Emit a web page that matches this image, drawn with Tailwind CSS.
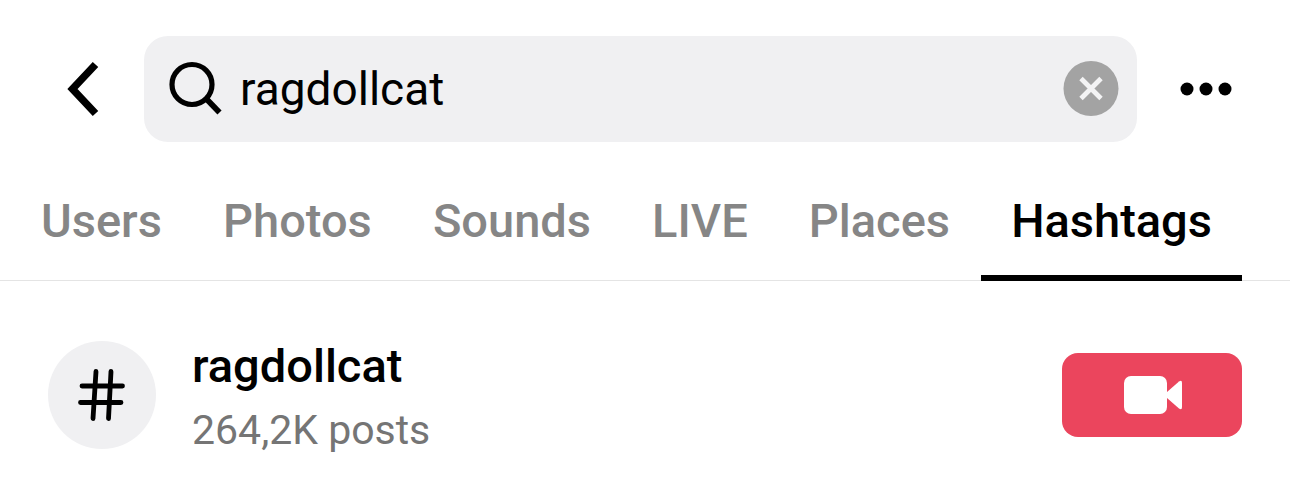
<!DOCTYPE html>
<html lang="en">
<head>
<meta charset="utf-8">
<meta name="viewport" content="width=device-width, initial-scale=1">
<title>Search: ragdollcat</title>
<script src="https://cdn.jsdelivr.net/npm/@tailwindcss/browser@4"></script>
</head>
<body class="min-h-screen bg-white text-black font-['Roboto','Liberation_Sans',sans-serif]">
<header class="flex items-center pt-9 pl-15 pr-[49px]">
  <button type="button" aria-label="Back" class="mr-9 shrink-0">
    <svg class="block h-16 w-12" viewBox="0 0 48 64" fill="none" stroke="currentColor" stroke-width="7.500" stroke-linejoin="miter"><path d="M35.500 7.500 12.500 32 35.500 56.500"/></svg>
  </button>
  <form role="search" class="flex h-[106px] min-w-0 flex-1 items-center rounded-3xl bg-[#f0f0f2] pl-6 pr-[18px]">
    <label for="q" class="mr-4 shrink-0">
      <svg class="block h-14 w-14" viewBox="0 0 56 56" fill="none" stroke="currentColor" role="img" aria-label="Search"><circle cx="24" cy="23.500" r="20" stroke-width="5.200"/><path d="M38 37.500 51.500 51.500" stroke-width="5.800"/></svg>
    </label>
    <input id="q" type="text" value="ragdollcat" class="min-w-0 flex-1 bg-transparent text-[46px] leading-16 outline-none">
    <button type="reset" aria-label="Clear search" class="shrink-0">
      <svg class="block h-14 w-14" viewBox="0 0 56 56"><circle cx="28" cy="27.500" r="27.500" fill="#a3a3a3"/><path d="M18 17.500 38 37.500M38 17.500 18 37.500" stroke="#f3f3f4" stroke-width="4.800"/></svg>
    </button>
  </form>
  <button type="button" aria-label="More options" class="ml-10 shrink-0">
    <svg class="block h-16 w-16" viewBox="0 0 64 64" fill="currentColor"><circle cx="10" cy="32" r="6.500"/><circle cx="29" cy="32" r="6.500"/><circle cx="48" cy="32" r="6.500"/></svg>
  </button>
</header>
<nav role="tablist" aria-label="Result type" class="mt-10 flex h-[99px] justify-between border-b border-[#e4e4e4] pl-[11px] pr-12 text-[47px] leading-14 font-medium text-[#868686] *:-mb-px *:border-b-6 *:px-[30px] *:pb-4">
  <button type="button" role="tab" aria-selected="false" class="border-transparent">Users</button>
  <button type="button" role="tab" aria-selected="false" class="border-transparent">Photos</button>
  <button type="button" role="tab" aria-selected="false" class="border-transparent">Sounds</button>
  <button type="button" role="tab" aria-selected="false" class="border-transparent">LIVE</button>
  <button type="button" role="tab" aria-selected="false" class="border-transparent">Places</button>
  <button type="button" role="tab" aria-selected="true" class="border-black text-black">Hashtags</button>
</nav>
<main class="flex items-center px-12 pt-[51px]">
  <div class="mr-9 flex size-27 shrink-0 items-center justify-center rounded-full bg-[#f0f0f2]">
    <svg class="h-14 w-12" viewBox="0 0 48 56" fill="none" stroke="currentColor" stroke-width="4.800" stroke-linecap="round" aria-hidden="true"><path d="M18 4.500 15 51.500M33 4.500 30.500 51.500M4 19H44.500M2.500 35.500H43"/></svg>
  </div>
  <div class="min-w-0 flex-1 pt-[6px]">
    <h2 class="text-[47px] leading-14 font-medium">ragdollcat</h2>
    <p class="mt-2 text-[41px] leading-14 text-[#757575]">264,2K posts</p>
  </div>
  <button type="button" aria-label="Record video" class="flex h-21 w-45 shrink-0 items-center justify-center rounded-2xl bg-[#eb455d] text-white">
    <svg class="h-10 w-15" viewBox="0 0 60 40" fill="currentColor"><rect x="2" y="1" width="43" height="38" rx="7"/><path d="M45 17 57 6.500Q60 4.500 60 8V32Q60 35.500 57 33.500L45 23Z"/></svg>
  </button>
</main>
</body>
</html>
